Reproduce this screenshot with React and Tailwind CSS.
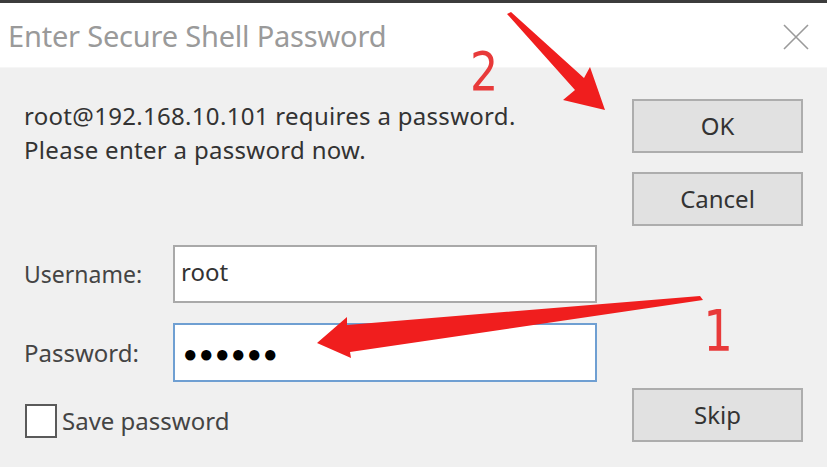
import React from "react";

/**
 * Enter Secure Shell Password — annotated login dialog
 */
export default function App() {
  const font = { fontFamily: '"Noto Sans", "Open Sans", sans-serif' };
  const mark = { fontFamily: '"DejaVu Sans", sans-serif', fontWeight: 400, transform: "scaleX(0.82)" };

  return (
    <div className="relative w-[827px] h-[467px] overflow-hidden bg-[#f0f0f0]" style={font}>
      <div className="h-[3px] bg-[#3c3c3c]" />
      <div className="h-[65px] bg-white flex items-center justify-between pl-[8px] pr-[18px] border-b border-[#f6f6f6]">
        <span className="text-[29px] text-[#9a9a9a] leading-none tracking-[-0.2px]">Enter Secure Shell Password</span>
        <svg width="26" height="26" viewBox="0 0 26 26" className="mt-[4px]">
          <path d="M1 1 L25 25 M25 1 L1 25" stroke="#9a9a9a" strokeWidth="1.6" fill="none" />
        </svg>
      </div>

      <div className="flex pt-[31px] pl-[24px]">
        <div className="w-[573px]">
          <div className="text-[24px] leading-[34px] text-[#333] tracking-[0.3px]">
            <div>root@192.168.10.101 requires a password.</div>
            <div>Please enter a password now.</div>
          </div>

          <div className="mt-[78px] flex items-center">
            <span className="w-[149px] text-[23px] text-[#444]">Username:</span>
            <div className="w-[424px] h-[58px] bg-white border-2 border-[#a9a9a9] flex items-center pl-[6px] pb-[4px] text-[24px] text-[#333]">
              root
            </div>
          </div>
          <div className="mt-[20px] flex items-center">
            <span className="w-[149px] text-[24px] text-[#444]">Password:</span>
            <div className="w-[424px] h-[59px] bg-white border-2 border-[#6f9fd2] flex items-center pl-[8px] text-[24px] text-black tracking-[1.5px]">
              ●●●●●●
            </div>
          </div>
          <label className="mt-[21px] flex items-center">
            <span className="w-[32px] h-[34px] bg-white border-2 border-[#5a5a5a] ml-[1px]" />
            <span className="ml-[5px] text-[24px] text-[#444]">Save password</span>
          </label>
        </div>

        <div className="ml-[35px] flex flex-col">
          <button className="w-[171px] h-[54px] bg-[#e1e1e1] border-2 border-[#adadad] text-[24px] text-[#333]">OK</button>
          <button className="mt-[19px] w-[171px] h-[54px] bg-[#e1e1e1] border-2 border-[#adadad] text-[24px] text-[#333]">Cancel</button>
          <button className="mt-[162px] w-[171px] h-[54px] bg-[#e1e1e1] border-2 border-[#adadad] text-[24px] text-[#333]">Skip</button>
        </div>
      </div>

      {/* red annotations */}
      <svg className="absolute left-0 top-0 pointer-events-none" width="827" height="467" viewBox="0 0 827 467">
        <path d="M507 14 L511 12 L584 78 L590 67 L605 110 L563 100 L575 90 Z" fill="#f01e1e" />
        <path d="M700 296 L703 300 L350 352 L351 358 L317 343 L347 317 L347 325 Z" fill="#f01e1e" />
      </svg>
      <span className="absolute left-[467px] top-[53px] text-[54px] leading-[38px] text-[#e83a3a]" style={mark}>2</span>
      <span className="absolute left-[700px] top-[311px] text-[57px] leading-[40px] text-[#e83a3a]" style={mark}>1</span>
    </div>
  );
}
